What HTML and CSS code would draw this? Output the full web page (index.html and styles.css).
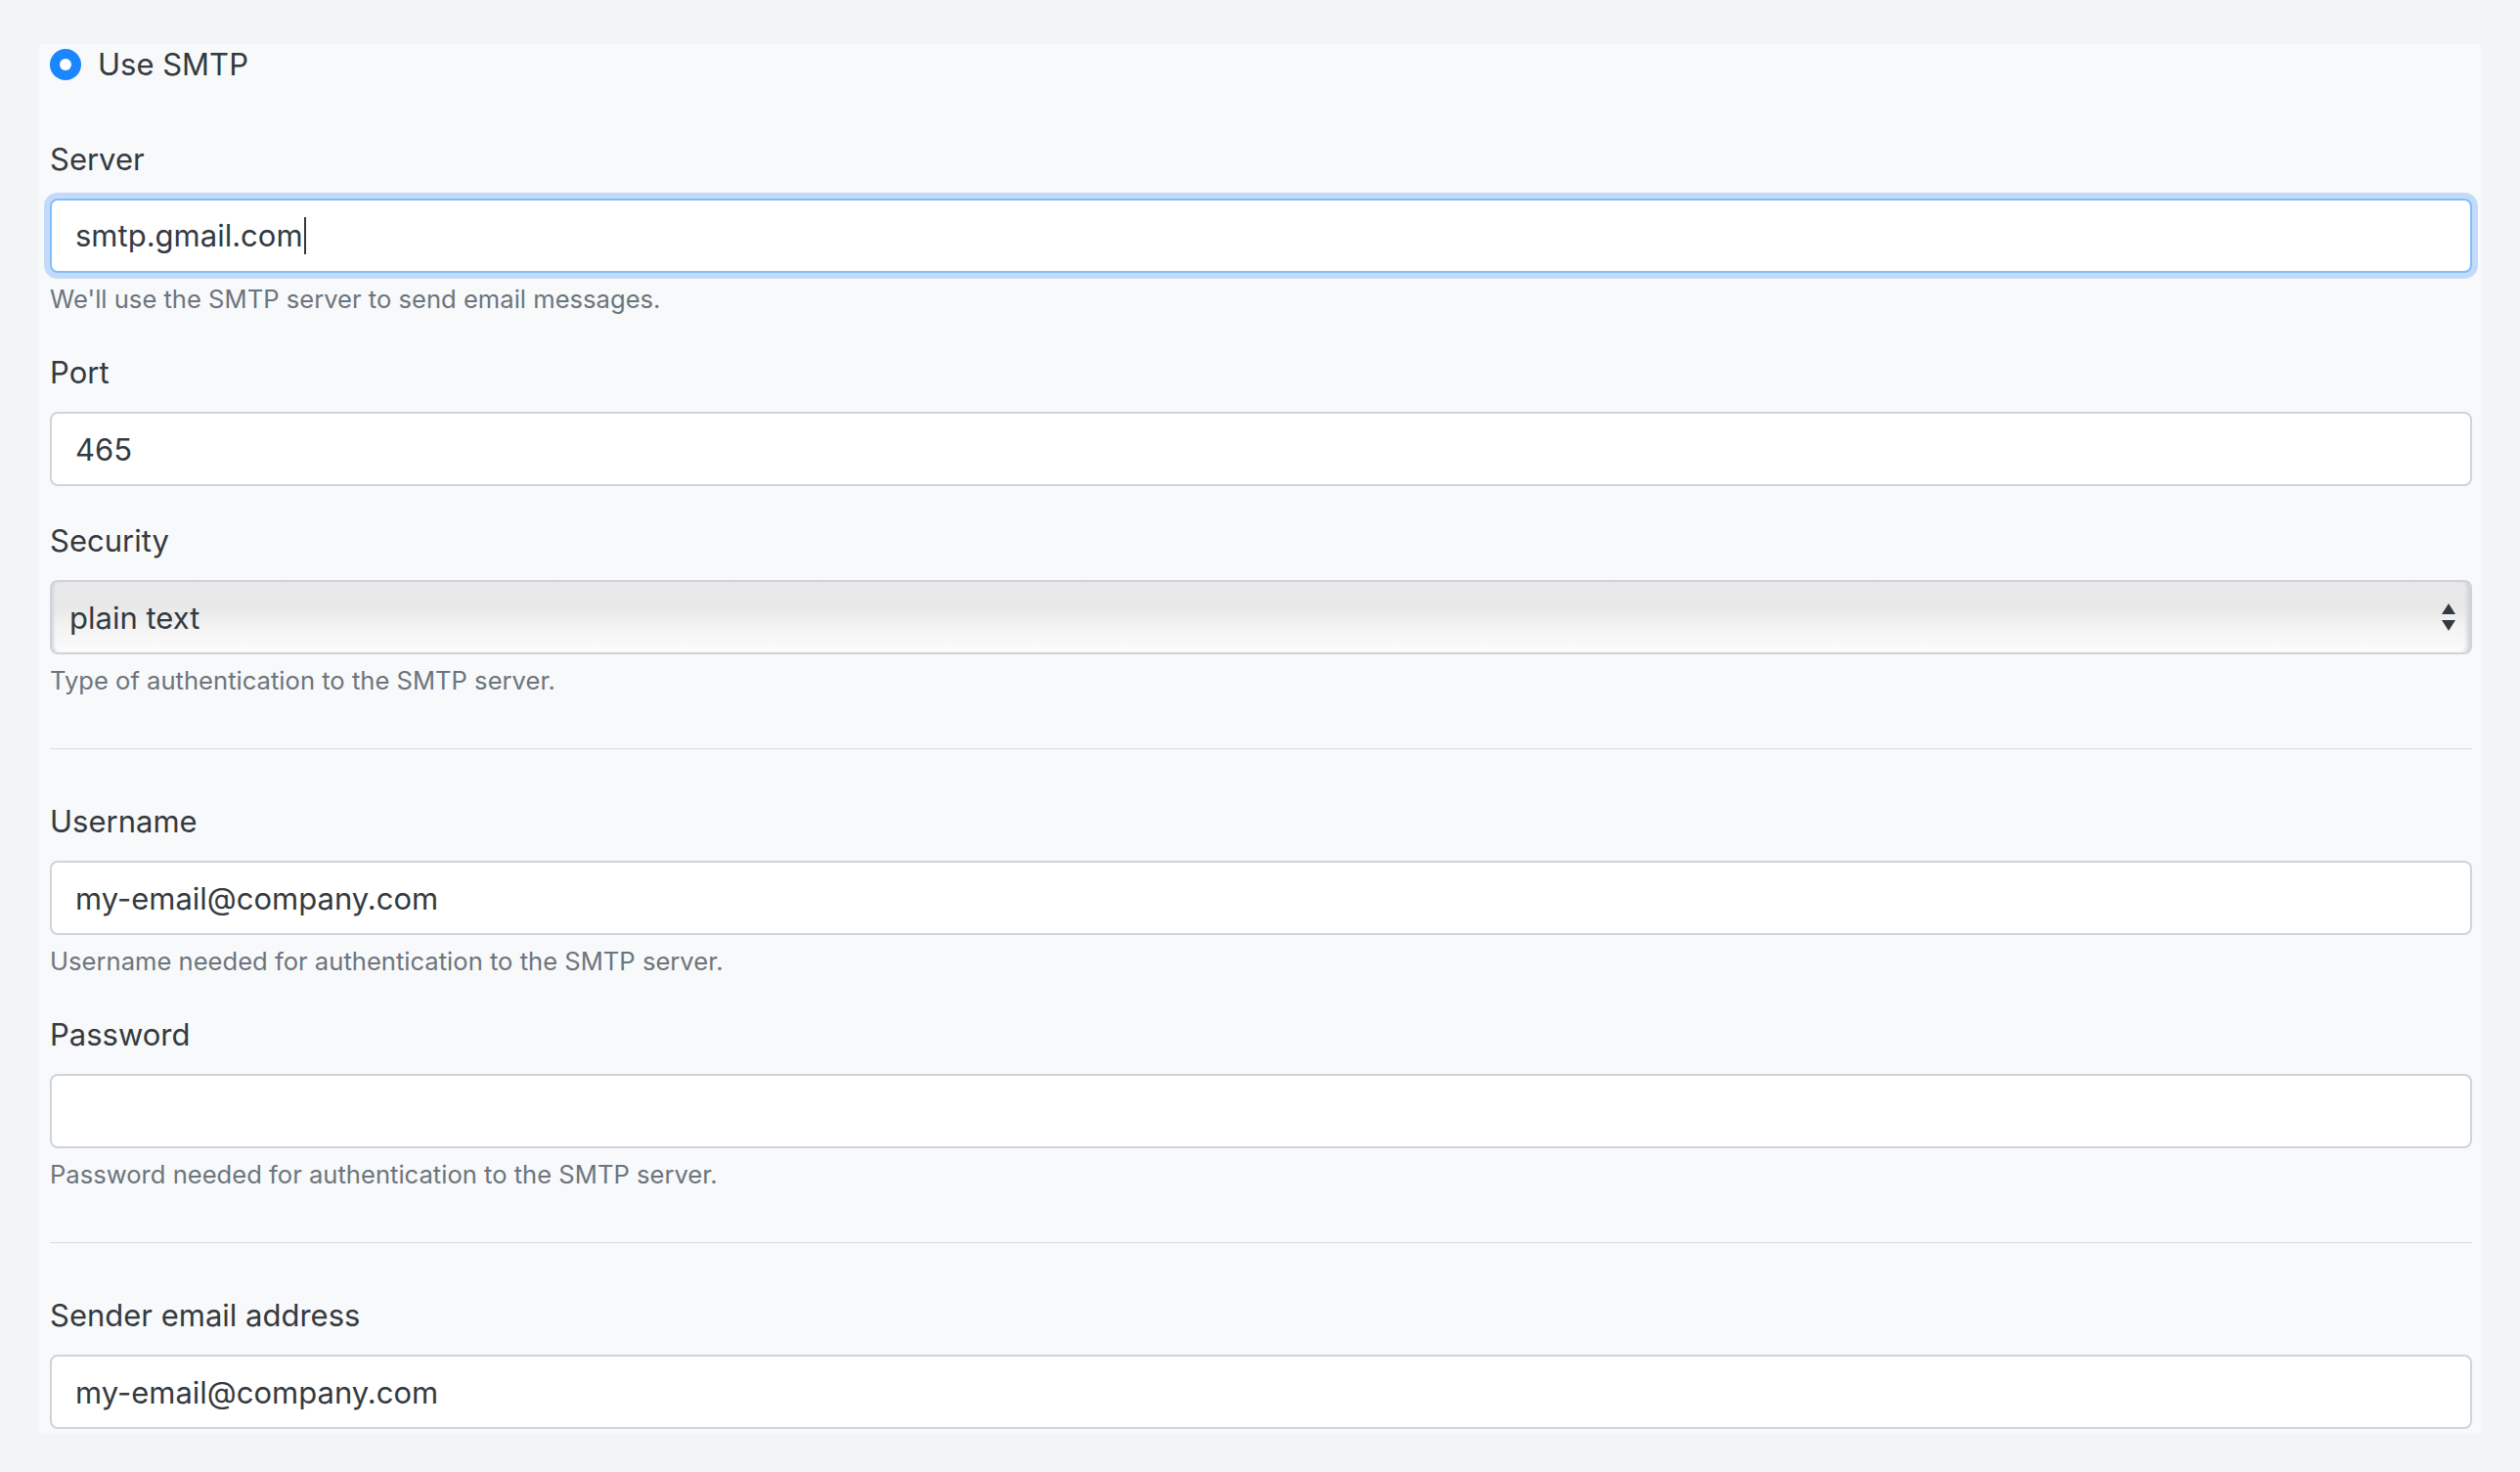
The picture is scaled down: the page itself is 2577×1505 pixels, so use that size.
FILE: index.html
```html
<!DOCTYPE html>
<html lang="en">
<head>
    <meta charset="UTF-8">
    <meta name="viewport" content="width=device-width, initial-scale=1.0">
    <title>Mail settings</title>
    <link rel="stylesheet" href="styles.css">
</head>
<body>
    <div class="panel">
        <div class="radio-row">
            <span class="radio checked"></span>
            <label class="radio-label">Use SMTP</label>
        </div>

        <div class="form-group first">
            <label class="field-label">Server</label>
            <div class="form-control focused">smtp.gmail.com<span class="caret"></span></div>
            <small class="form-text">We'll use the SMTP server to send email messages.</small>
        </div>

        <div class="form-group">
            <label class="field-label" for="port">Port</label>
            <input class="form-control" id="port" type="text" value="465">
        </div>

        <div class="form-group">
            <label class="field-label" for="security">Security</label>
            <div class="select-wrap">
                <select class="native-select" id="security">
                    <option>plain text</option>
                    <option>SSL/TLS</option>
                    <option>STARTTLS</option>
                </select>
                <svg class="select-arrows" width="14" height="28" viewBox="0 0 14 28">
                    <path d="M7 0 L14 11 L0 11 Z" fill="#343a40"/>
                    <path d="M0 17 L14 17 L7 28 Z" fill="#343a40"/>
                </svg>
            </div>
            <small class="form-text">Type of authentication to the SMTP server.</small>
        </div>

        <hr>

        <div class="form-group">
            <label class="field-label" for="username">Username</label>
            <input class="form-control" id="username" type="text" value="my-email@company.com">
            <small class="form-text">Username needed for authentication to the SMTP server.</small>
        </div>

        <div class="form-group">
            <label class="field-label" for="password">Password</label>
            <input class="form-control" id="password" type="password" value="">
            <small class="form-text">Password needed for authentication to the SMTP server.</small>
        </div>

        <hr>

        <div class="form-group last">
            <label class="field-label" for="sender">Sender email address</label>
            <input class="form-control" id="sender" type="text" value="my-email@company.com">
        </div>
    </div>
</body>
</html>
```

FILE: styles.css
```css
* {
    box-sizing: border-box;
}

body {
    margin: 0;
    padding: 45px 40px 45px 40px;
    background-color: #f3f4f6;
    font-family: Inter, "Liberation Sans", sans-serif;
    font-size: 31px;
    line-height: 1.5;
    color: #343a40;
}

.panel {
    background-color: #f8f9fa;
    padding: 0 9px 4px 11px;
}

.radio-row {
    display: flex;
    align-items: center;
    gap: 17px;
    height: 42px;
}

.radio {
    width: 32px;
    height: 32px;
    border-radius: 50%;
    background-color: #1a86ff;
    display: flex;
    align-items: center;
    justify-content: center;
}

.radio.checked::after {
    content: "";
    width: 12px;
    height: 12px;
    border-radius: 50%;
    background-color: #fff;
}

.radio-label {
    font-size: 31px;
}

.form-group {
    margin-bottom: 32px;
}

.form-group.first {
    margin-top: 52px;
}

.form-group.last {
    margin-bottom: 0;
}

.field-label {
    display: block;
    margin-bottom: 16px;
    line-height: 48px;
}

.form-control {
    display: flex;
    align-items: center;
    width: 100%;
    height: 76px;
    padding: 0 24px;
    font-family: inherit;
    font-size: 31px;
    color: #343a40;
    background-color: #fff;
    border: 2px solid #ced4da;
    border-radius: 8px;
    outline: none;
}

.form-control.focused {
    border-color: #80bdff;
    box-shadow: 0 0 0 6px #c3dbf9;
}

.caret {
    display: inline-block;
    width: 2px;
    height: 38px;
    margin-left: 1px;
    background-color: #343a40;
}

.form-text {
    display: block;
    margin-top: 8px;
    font-size: 25.6px;
    line-height: 38px;
    color: #6c757d;
}

.select-wrap {
    position: relative;
}

.native-select {
    -webkit-appearance: none;
    appearance: none;
    width: 100%;
    height: 76px;
    padding: 0 18px;
    font-family: inherit;
    font-size: 31px;
    color: #343a40;
    border: 2px solid #ced4da;
    border-radius: 8px;
    background: linear-gradient(#e9e9e9 0%, #e8e8e8 35%, #f3f3f3 65%, #fcfcfc 100%);
    box-shadow: inset 4px 0 3px -2px #d4d6da, inset -6px 0 4px -3px #cfd1d5;
    outline: none;
}

.select-arrows {
    position: absolute;
    right: 17px;
    top: 24px;
    pointer-events: none;
}

hr {
    margin: 50px 0;
    border: 0;
    border-top: 1px solid #dcdde0;
}
```
